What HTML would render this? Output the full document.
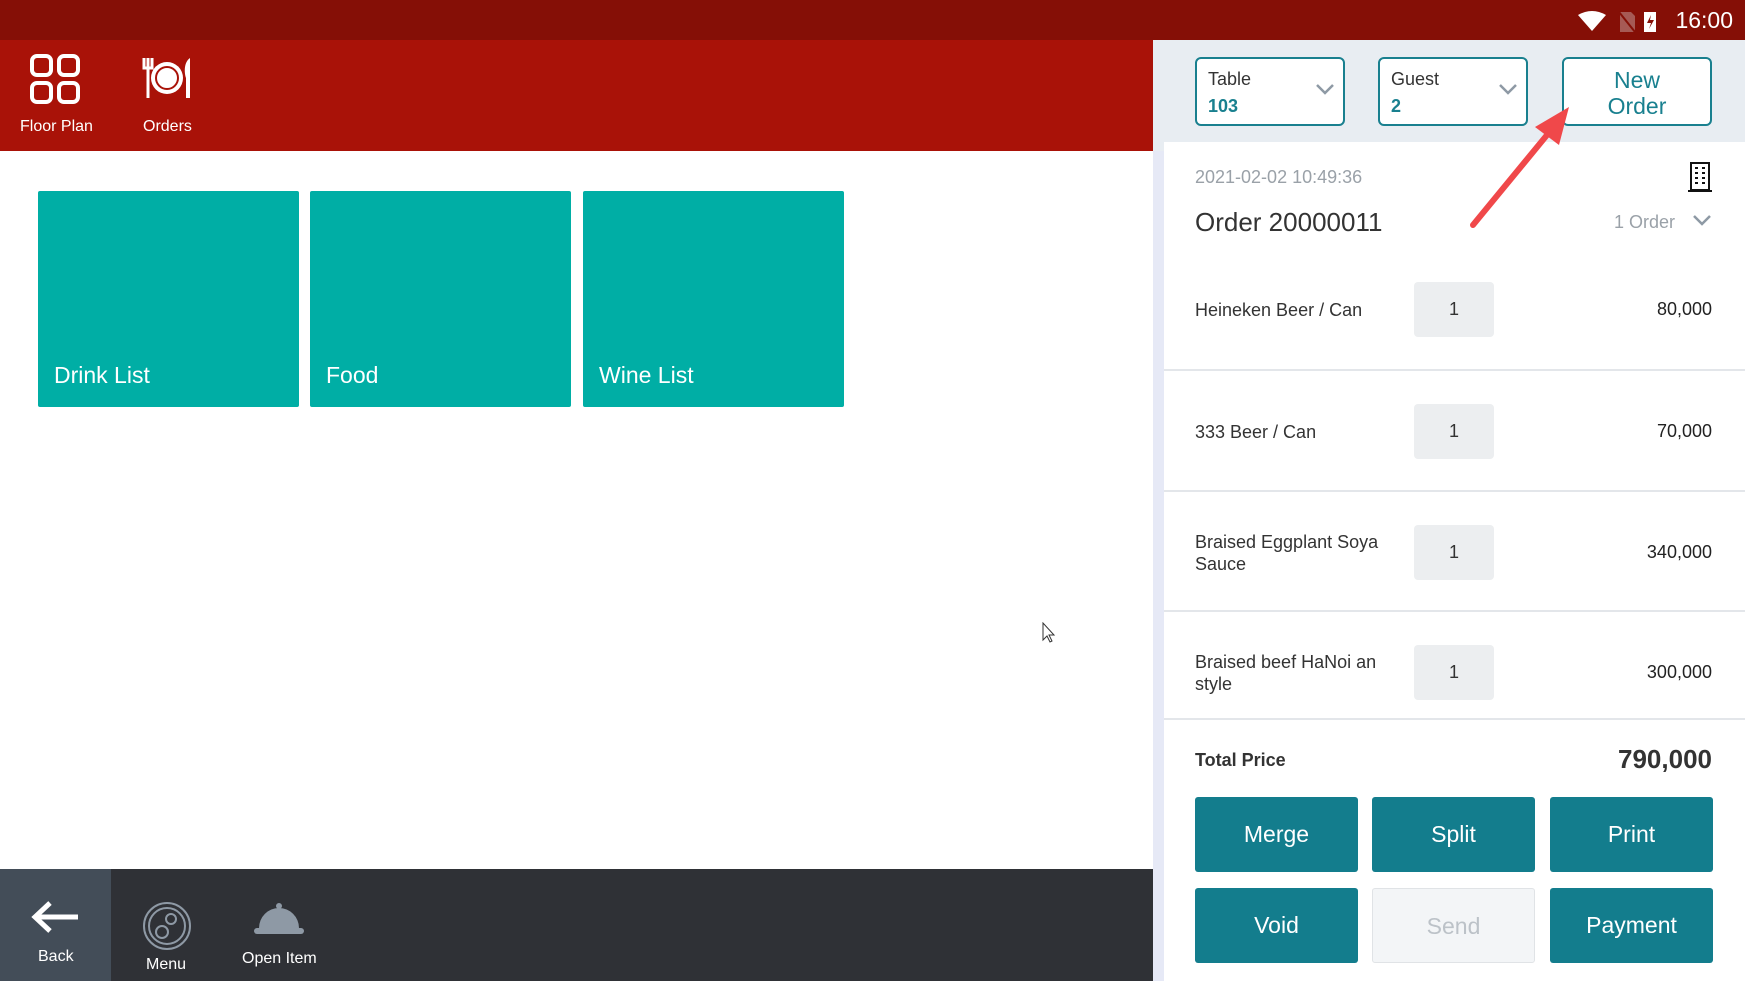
<!DOCTYPE html>
<html><head><style>
*{margin:0;padding:0;box-sizing:border-box}
body{width:1745px;height:981px;overflow:hidden;font-family:"Liberation Sans",sans-serif;background:#fff;position:relative}
.a{position:absolute}
.tile{position:absolute;top:191px;width:261px;height:216px;background:#00aea5;color:#fff;font-size:23px;padding:0 0 18px 16px;display:flex;align-items:flex-end;border-radius:2px}
.sel{position:absolute;top:57px;height:69px;border:2px solid #19808f;border-radius:6px;background:#fff}
.row{position:absolute;left:1164px;width:581px;border-bottom:2px solid #e3e6ea}
.nm{position:absolute;left:31px;font-size:18px;color:#333;line-height:22px}
.q{position:absolute;left:250px;width:80px;height:55px;background:#eceef0;border-radius:4px;font-size:18px;color:#333;text-align:center;line-height:55px}
.pr{position:absolute;right:33px;font-size:18px;color:#222}
.btn{position:absolute;width:163px;height:75px;background:#137d8d;color:#fff;font-size:23px;text-align:center;line-height:75px;border-radius:3px}
</style></head><body>
<div class="a" style="left:0;top:0;width:1745px;height:40px;background:#850f06"></div>
<div class="a" style="right:12px;top:7px;color:#fff;font-size:23px">16:00</div>
<svg class="a" style="left:1576px;top:9px" width="80" height="24"><path d="M2 6 Q16 -2 30 6 L16 22Z" fill="#fff"/><path d="M44 3h11l4 4v16h-15z" fill="#a65a55"/><line x1="43" y1="3" x2="59" y2="23" stroke="#850f06" stroke-width="2"/><rect x="68" y="3" width="12" height="20" fill="#fff"/><path d="M75 6l-4 8h4l-2 6 5-9h-4z" fill="#850f06"/></svg>
<div class="a" style="left:0;top:40px;width:1153px;height:111px;background:#a91208"></div>
<svg class="a" style="left:29px;top:53px" width="52" height="52" fill="none" stroke="#fff" stroke-width="4"><rect x="3" y="3" width="19" height="19" rx="5"/><rect x="30" y="3" width="19" height="19" rx="5"/><rect x="3" y="30" width="19" height="19" rx="5"/><rect x="30" y="30" width="19" height="19" rx="5"/></svg>
<div class="a" style="left:20px;top:118px;color:#fff;font-size:16px">Floor Plan</div>
<svg class="a" style="left:140px;top:56px" width="54" height="44"><path d="M4 2v10h8V2M8 2v40" stroke="#fff" stroke-width="3" fill="none"/><circle cx="27" cy="22" r="16" fill="#fff"/><circle cx="27" cy="22" r="11" fill="none" stroke="#a91208" stroke-width="2"/><path d="M50 2c-6 4-6 14-4 20v20h4z" fill="#fff"/></svg>
<div class="a" style="left:143px;top:118px;color:#fff;font-size:16px">Orders</div>
<div class="tile" style="left:38px">Drink List</div>
<div class="tile" style="left:310px">Food</div>
<div class="tile" style="left:583px">Wine List</div>
<div class="a" style="left:0;top:869px;width:1153px;height:112px;background:#2f3136"></div>
<div class="a" style="left:0;top:869px;width:111px;height:112px;background:#434d58"></div>
<svg class="a" style="left:30px;top:900px" width="52" height="34"><path d="M48 17H6M20 3L5 17l15 14" stroke="#fff" stroke-width="5" fill="none"/></svg>
<div class="a" style="left:38px;top:948px;color:#fff;font-size:16px">Back</div>
<svg class="a" style="left:142px;top:901px" width="50" height="50" fill="none" stroke="#8e99a5" stroke-width="2"><circle cx="25" cy="25" r="23"/><circle cx="25" cy="25" r="18"/><circle cx="29" cy="18" r="5"/><circle cx="20" cy="31" r="6"/></svg>
<div class="a" style="left:146px;top:956px;color:#fff;font-size:16px">Menu</div>
<svg class="a" style="left:253px;top:902px" width="52" height="34"><path d="M6 26a20 20 0 0 1 40 0z" fill="#8e99a5"/><circle cx="26" cy="4" r="3" fill="#8e99a5"/><rect x="1" y="26" width="50" height="6" rx="3" fill="#8e99a5"/></svg>
<div class="a" style="left:242px;top:950px;color:#fff;font-size:16px">Open Item</div>
<div class="a" style="left:1153px;top:40px;width:592px;height:941px;background:#e8edf2"></div>
<div class="a" style="left:1153px;top:151px;width:11px;height:830px;background:#e6e9f6"></div>
<div class="a" style="left:1164px;top:142px;width:581px;height:839px;background:#fff"></div>
<div class="sel" style="left:1195px;width:150px"><div class="a" style="left:11px;top:10px;font-size:18px;color:#333">Table</div><div class="a" style="left:11px;top:37px;font-size:18px;color:#19808f;font-weight:bold">103</div><svg class="a" style="left:118px;top:24px" width="20" height="12"><path d="M2 2l8 8 8-8" stroke="#8e99a5" stroke-width="2.5" fill="none"/></svg></div>
<div class="sel" style="left:1378px;width:150px"><div class="a" style="left:11px;top:10px;font-size:18px;color:#333">Guest</div><div class="a" style="left:11px;top:37px;font-size:18px;color:#19808f;font-weight:bold">2</div><svg class="a" style="left:118px;top:24px" width="20" height="12"><path d="M2 2l8 8 8-8" stroke="#8e99a5" stroke-width="2.5" fill="none"/></svg></div>
<div class="sel" style="left:1562px;width:150px;color:#19808f;font-size:23px;text-align:center;line-height:26px;padding-top:8px">New<br>Order</div>
<svg class="a" style="left:1465px;top:105px" width="130" height="130"><line x1="8" y1="120" x2="82" y2="30" stroke="#f0484a" stroke-width="6" stroke-linecap="round"/><path d="M104 2L70 22 94 40z" fill="#f0484a"/></svg>
<div class="a" style="left:1195px;top:167px;font-size:18px;color:#9aa1a8">2021-02-02 10:49:36</div>
<svg class="a" style="left:1688px;top:160px" width="24" height="32"><rect x="3" y="3" width="18" height="27" fill="none" stroke="#111" stroke-width="2"/><path d="M7 8h3M14 8h3M7 13h3M14 13h3M7 18h3M14 18h3M7 23h3M14 23h3M0 31h24" stroke="#111" stroke-width="2"/></svg>
<div class="a" style="left:1195px;top:207px;font-size:26px;color:#333">Order 20000011</div>
<div class="a" style="left:1614px;top:212px;font-size:18px;color:#9aa1a8">1 Order</div>
<svg class="a" style="left:1692px;top:214px" width="20" height="12"><path d="M2 2l8 8 8-8" stroke="#8e99a5" stroke-width="2.5" fill="none"/></svg>
<div class="row" style="top:250px;height:121px"><div class="nm" style="top:49px">Heineken Beer / Can</div><div class="q" style="top:32px">1</div><div class="pr" style="top:49px">80,000</div></div>
<div class="row" style="top:371px;height:121px"><div class="nm" style="top:50px">333 Beer / Can</div><div class="q" style="top:33px">1</div><div class="pr" style="top:50px">70,000</div></div>
<div class="row" style="top:492px;height:120px"><div class="nm" style="top:39px">Braised Eggplant Soya<br>Sauce</div><div class="q" style="top:33px">1</div><div class="pr" style="top:50px">340,000</div></div>
<div class="row" style="top:612px;height:108px"><div class="nm" style="top:39px">Braised beef HaNoi an<br>style</div><div class="q" style="top:33px">1</div><div class="pr" style="top:50px">300,000</div></div>
<div class="a" style="left:1195px;top:750px;font-size:18px;color:#333;font-weight:bold">Total Price</div>
<div class="a" style="right:33px;top:744px;font-size:26px;color:#333;font-weight:bold">790,000</div>
<div class="btn" style="left:1195px;top:797px">Merge</div>
<div class="btn" style="left:1372px;top:797px">Split</div>
<div class="btn" style="left:1550px;top:797px">Print</div>
<div class="btn" style="left:1195px;top:888px">Void</div>
<div class="btn" style="left:1372px;top:888px;background:#f3f5f7;color:#bcc2c8;border:1px solid #e0e3e6">Send</div>
<div class="btn" style="left:1550px;top:888px">Payment</div>
<svg class="a" style="left:1042px;top:622px" width="14" height="22"><path d="M1 1v17l4-4 3 6 2-1-3-6h5z" fill="#fff" stroke="#333"/></svg>
</body></html>
